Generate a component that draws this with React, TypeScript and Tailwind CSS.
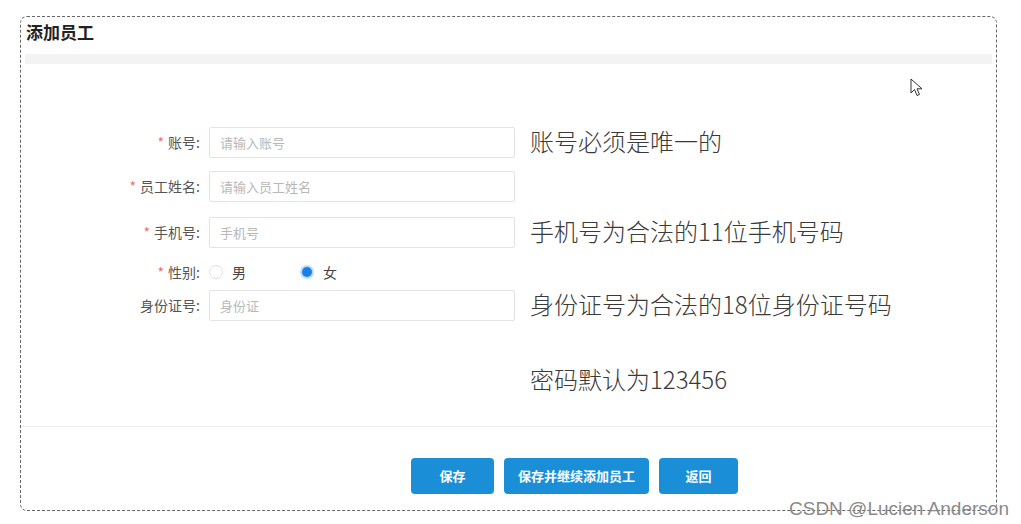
// 添加员工表单

const FONT = "font-['Microsoft_YaHei','Noto_Sans_CJK_SC',sans-serif]"

function Label({ text, required }: { text: string; required?: boolean }) {
  return (
    <div className="w-[179px] shrink-0 text-right text-[14px] text-[#555]">
      {required && <span className="mr-[4px] text-[#f56c6c]">*</span>}
      {text}:
    </div>
  )
}

function Field({
  label,
  placeholder,
  required,
  hint,
  className,
}: {
  label: string
  placeholder: string
  required?: boolean
  hint?: string
  className?: string
}) {
  return (
    <div className={`flex h-[31px] items-center ${className ?? ''}`}>
      <Label text={label} required={required} />
      <input
        placeholder={placeholder}
        className="ml-[9px] h-[31px] w-[306px] rounded-[2px] border border-[#e3e3e3] bg-white px-[10px] text-[13px] text-[#333] outline-none placeholder:text-[#b8b8b8]"
      />
      {hint && (
        <span className="ml-[15px] pb-[4px] text-[24px] font-light leading-[30px] text-[#3a3a3a]">
          {hint}
        </span>
      )}
    </div>
  )
}

function Radio({ label, checked }: { label: string; checked?: boolean }) {
  return (
    <label className="flex items-center gap-[9px] text-[14px] text-[#444]">
      {checked ? (
        <span className="flex h-[14px] w-[14px] items-center justify-center rounded-full bg-[#bcdcfa]">
          <span className="h-[10px] w-[10px] rounded-full bg-[#1a7fe8]" />
        </span>
      ) : (
        <span className="h-[14px] w-[14px] rounded-full border border-[#dcdfe6] bg-white" />
      )}
      {label}
    </label>
  )
}

export default function App() {
  return (
    <div className={`relative h-[524px] w-[1021px] overflow-hidden bg-white pl-[20px] pt-[16px] ${FONT}`}>
      <div className="flex h-[495px] w-[977px] flex-col rounded-[7px] border border-dashed border-[#666]">
        <div className="h-[37px] px-[5px] pt-[4px] text-[17px] font-bold leading-[22px] text-[#222]">
          添加员工
        </div>
        <div className="mx-[4px] h-[10px] bg-[#f3f3f3]" />

        <div className="pt-[63px]">
          <Field label="账号" placeholder="请输入账号" required hint="账号必须是唯一的" />
          <Field label="员工姓名" placeholder="请输入员工姓名" required className="mt-[13px]" />
          <Field
            label="手机号"
            placeholder="手机号"
            required
            hint="手机号为合法的11位手机号码"
            className="mt-[15px]"
          />
          <div className="mt-[10px] flex h-[28px] items-center">
            <Label text="性别" required />
            <div className="ml-[9px] flex items-center gap-[54px]">
              <Radio label="男" />
              <Radio label="女" checked />
            </div>
          </div>
          <Field
            label="身份证号"
            placeholder="身份证"
            hint="身份证号为合法的18位身份证号码"
            className="mt-[4px]"
          />
          <div className="mt-[44px] flex h-[31px] items-center pb-[4px] pl-[509px] text-[24px] font-light text-[#3a3a3a]">
            密码默认为123456
          </div>
        </div>

        <div className="mt-[30px] h-px bg-[#ececec]" />

        <div className="mt-[31px] flex gap-[10px] pl-[390px]">
          <button className="h-[36px] w-[83px] rounded-[4px] bg-[#1a8fd8] text-[13px] font-bold text-white">
            保存
          </button>
          <button className="h-[36px] w-[145px] rounded-[4px] bg-[#1a8fd8] text-[13px] font-bold text-white">
            保存并继续添加员工
          </button>
          <button className="h-[36px] w-[79px] rounded-[4px] bg-[#1a8fd8] text-[13px] font-bold text-white">
            返回
          </button>
        </div>
      </div>

      <div className="absolute left-[789px] top-[495px] font-['Liberation_Sans',sans-serif] text-[19px] text-[#8a8a8a]">
        CSDN @Lucien Anderson
      </div>

      <svg className="absolute left-[910px] top-[78px]" width="14" height="20" viewBox="0 0 14 20">
        <path
          d="M1 1 L1 15 L4.5 11.5 L7 17.5 L9.5 16.5 L7 10.8 L12 10.8 Z"
          fill="white"
          stroke="#333"
          strokeWidth="1"
          strokeLinejoin="round"
        />
      </svg>
    </div>
  )
}
